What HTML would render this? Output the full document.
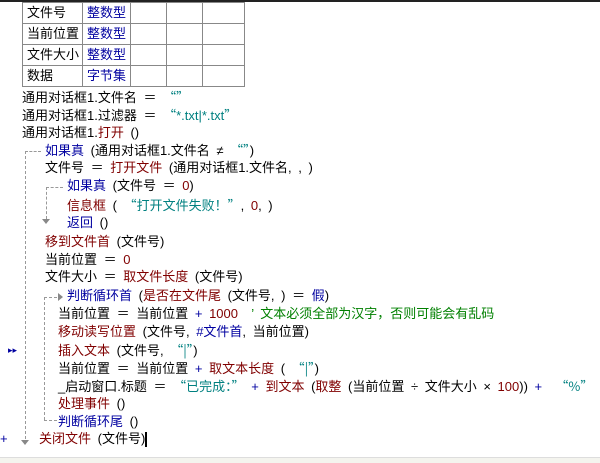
<!DOCTYPE html>
<html><head><meta charset="utf-8"><style>
body{margin:0;width:600px;height:462px;background:#fff;position:relative;overflow:hidden;font-family:"Liberation Sans","Noto Sans CJK SC",sans-serif;font-size:13px;color:#000}
.top{position:absolute;left:0;top:0;width:600px;height:2px;background:#222}
.bot{position:absolute;left:0;top:457px;width:600px;height:5px;background:#f4f4ee;border-top:1px solid #ddd}
table{position:absolute;left:22px;top:2px;border-collapse:collapse}
td{border:1px solid #888;height:20px;padding:0 0 0 4px;font-size:13px;line-height:20px}
.b{color:#0000a0}.r{color:#800000}.t{color:#008080}.g{color:#008000}
.q{font-family:"Noto Sans CJK SC",sans-serif}
.l{position:absolute;white-space:pre;line-height:18px;height:18px;word-spacing:3px}
.v{position:absolute;border-left:1px dashed #999;width:0}
.h{position:absolute;border-top:1px dashed #999;height:0}
.ar{position:absolute;width:0;height:0;border-left:4px solid transparent;border-right:4px solid transparent;border-top:5px solid #888}
.ra{position:absolute;width:0;height:0;border-top:4px solid transparent;border-bottom:4px solid transparent;border-left:5px solid #888}
</style></head><body>
<div class="top"></div>
<table>
<tr><td style="width:55px">文件号</td><td class="b" style="width:43px">整数型</td><td style="width:31px"></td><td style="width:31px"></td><td style="width:37px"></td></tr>
<tr><td>当前位置</td><td class="b">整数型</td><td></td><td></td><td></td></tr>
<tr><td>文件大小</td><td class="b">整数型</td><td></td><td></td><td></td></tr>
<tr><td>数据</td><td class="b">字节集</td><td></td><td></td><td></td></tr>
</table>
<div class="l" style="left:22px;top:88px">通用对话框1.文件名 ＝ <span class="t q">“”</span></div>
<div class="l" style="left:22px;top:106px">通用对话框1.过滤器 ＝ <span class="t"><span class="q">“</span>*.txt|*.txt<span class="q">”</span></span></div>
<div class="l" style="left:22px;top:124px">通用对话框1.<span class="r">打开</span> ()</div>
<div class="h" style="left:25px;top:151px;width:16px"></div>
<div class="v" style="left:25px;top:151px;height:288px"></div>
<div class="ar" style="left:21px;top:440px"></div>
<div class="l" style="left:45px;top:141px"><span class="b">如果真</span> (通用对话框1.文件名 ≠ <span class="t q">“”</span>)</div>
<div class="l" style="left:45px;top:159px">文件号 ＝ <span class="r">打开文件</span> (通用对话框1.文件名, , )</div>
<div class="h" style="left:46px;top:187px;width:17px"></div>
<div class="v" style="left:46px;top:187px;height:32px"></div>
<div class="ar" style="left:42px;top:219px"></div>
<div class="l" style="left:67px;top:177px"><span class="b">如果真</span> (文件号 ＝ <span class="r">0</span>)</div>
<div class="l" style="left:67px;top:196px"><span class="r">信息框</span> ( <span class="t q">“打开文件失败！”</span>, <span class="r">0</span>, )</div>
<div class="l" style="left:67px;top:214px"><span class="b">返回</span> ()</div>
<div class="l" style="left:45px;top:233px"><span class="r">移到文件首</span> (文件号)</div>
<div class="l" style="left:45px;top:251px">当前位置 ＝ <span class="r">0</span></div>
<div class="l" style="left:45px;top:268px">文件大小 ＝ <span class="r">取文件长度</span> (文件号)</div>
<div class="h" style="left:44px;top:297px;width:13px"></div>
<div class="ra" style="left:58px;top:293px"></div>
<div class="v" style="left:44px;top:297px;height:123px"></div>
<div class="h" style="left:44px;top:420px;width:13px"></div>
<div class="l" style="left:67px;top:287px"><span class="b">判断循环首</span> (<span class="r">是否在文件尾</span> (文件号, ) ＝ <span class="b">假</span>)</div>
<div class="l" style="left:58px;top:305px">当前位置 ＝ 当前位置 <span class="b">+</span> <span class="r">1000</span>  <span class="g">’ 文本必须全部为汉字，否则可能会有乱码</span></div>
<div class="l" style="left:58px;top:323px"><span class="r">移动读写位置</span> (文件号, <span class="b">#文件首</span>, 当前位置)</div>
<div class="l" style="left:8px;top:341px;color:#0000a0;font-size:9px">▸▸</div>
<div class="l" style="left:58px;top:341px"><span class="r">插入文本</span> (文件号, <span class="t q">“|”</span>)</div>
<div class="l" style="left:58px;top:359px">当前位置 ＝ 当前位置 <span class="b">+</span> <span class="r">取文本长度</span> ( <span class="t q">“|”</span>)</div>
<div class="l" style="left:58px;top:377px">_启动窗口.标题 ＝ <span class="t q">“已完成：”</span> <span class="b">+</span> <span class="r">到文本</span> (<span class="r">取整</span> (当前位置 ÷ 文件大小 × <span class="r">100</span>)) <span class="b">+</span>  <span class="t q">“%”</span></div>
<div class="l" style="left:58px;top:395px"><span class="r">处理事件</span> ()</div>
<div class="l" style="left:58px;top:413px"><span class="b">判断循环尾</span> ()</div>
<div class="l" style="left:0px;top:430px;color:#0000a0">+</div>
<div class="l" style="left:39px;top:430px"><span class="r">关闭文件</span> (文件号)<span style="display:inline-block;width:2px;height:15px;background:#000;vertical-align:middle"></span></div>
<div class="bot"></div>
</body></html>
